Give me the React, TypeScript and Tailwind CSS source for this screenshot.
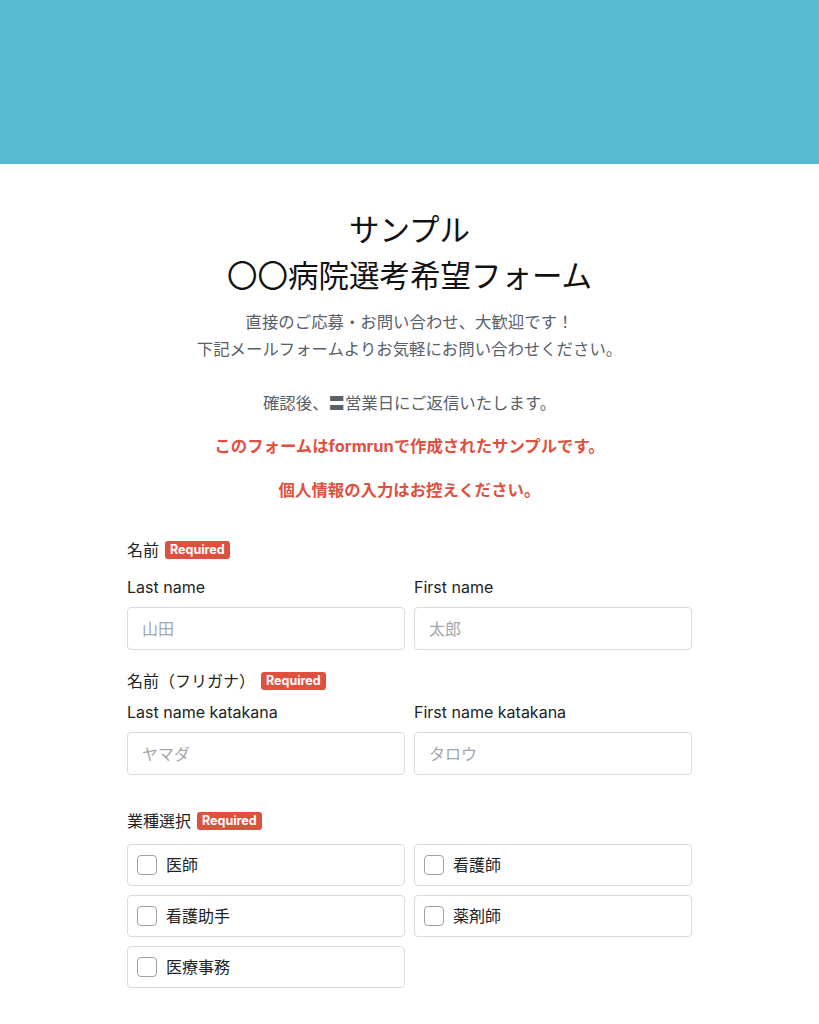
const font = 'font-["Inter","Noto_Sans_CJK_JP",sans-serif]';

function Required() {
  return (
    <span className="ml-[6px] inline-flex h-[18px] items-center rounded-[3px] bg-[#e0503f] px-[5px] text-[12.5px] font-bold leading-none text-white">
      Required
    </span>
  );
}

function SectionLabel({ text }: { text: string }) {
  return (
    <div className="flex items-center text-[16px] leading-[22px] text-[#222]">
      <span>{text}</span>
      <Required />
    </div>
  );
}

function Field({ label, placeholder }: { label: string; placeholder: string }) {
  return (
    <div className="flex flex-col">
      <div className="text-[16px] leading-[22px] text-[#222]">{label}</div>
      <input
        className="mt-[9px] h-[43px] w-full rounded-[4px] border border-[#d8dcdf] px-[14px] text-[16px] placeholder:text-[#a3a7ab] outline-none"
        placeholder={placeholder}
      />
    </div>
  );
}

function Option({ text }: { text: string }) {
  return (
    <label className="flex h-[42px] items-center rounded-[4px] border border-[#d8dcdf] px-[9px] text-[16px] text-[#222]">
      <span className="h-[20px] w-[20px] rounded-[4px] border border-[#9ea3a8] bg-white" />
      <span className="ml-[9px]">{text}</span>
    </label>
  );
}

export default function App() {
  return (
    <div className={`${font} min-h-screen bg-white`}>
      <div className="h-[164px] bg-[#58b9d2]" />
      <div className="mx-auto w-[565px] pt-[43px]">
        <h1 className="text-center text-[30.5px] font-normal leading-[46px] text-[#111]">
          サンプル
          <br />
          〇〇病院選考希望フォーム
        </h1>
        <div className="mt-[10px] text-center text-[16.4px] leading-[27px] text-[#58606a]">
          直接のご応募・お問い合わせ、大歓迎です！
          <br />
          下記メールフォームよりお気軽にお問い合わせください。
          <br />
          <br />
          確認後、〓営業日にご返信いたします。
        </div>
        <p className="mt-[16px] text-center text-[16.4px] font-bold leading-[27px] text-[#e0503f]">
          このフォームはformrunで作成されたサンプルです。
        </p>
        <p className="mt-[17px] text-center text-[16.4px] font-bold leading-[27px] text-[#e0503f]">
          個人情報の入力はお控えください。
        </p>

        <div className="mt-[35px]">
          <SectionLabel text="名前" />
          <div className="mt-[15px] grid grid-cols-2 gap-[9px]">
            <Field label="Last name" placeholder="山田" />
            <Field label="First name" placeholder="太郎" />
          </div>
        </div>

        <div className="mt-[20px]">
          <SectionLabel text="名前（フリガナ）" />
          <div className="mt-[9px] grid grid-cols-2 gap-[9px]">
            <Field label="Last name katakana" placeholder="ヤマダ" />
            <Field label="First name katakana" placeholder="タロウ" />
          </div>
        </div>

        <div className="mt-[35px]">
          <SectionLabel text="業種選択" />
          <div className="mt-[12px] grid grid-cols-2 gap-[9px]">
            <Option text="医師" />
            <Option text="看護師" />
            <Option text="看護助手" />
            <Option text="薬剤師" />
            <Option text="医療事務" />
          </div>
        </div>

        <div className="mt-[35px] pb-[40px]">
          <SectionLabel text="希望雇用形態" />
        </div>
      </div>
    </div>
  );
}
